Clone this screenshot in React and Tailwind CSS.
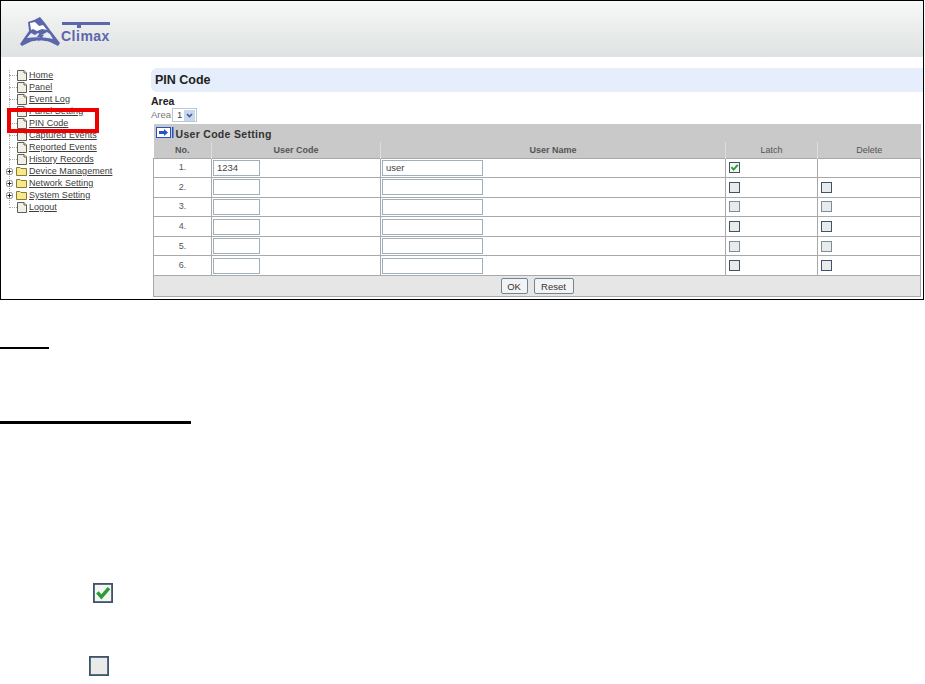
import { useState } from "react";

const menu = [
  { label: "Home" },
  { label: "Panel" },
  { label: "Event Log" },
  { label: "Panel Setting" },
  { label: "PIN Code" },
  { label: "Captured Events" },
  { label: "Reported Events" },
  { label: "History Records" },
  { label: "Device Management", folder: true },
  { label: "Network Setting", folder: true },
  { label: "System Setting", folder: true },
  { label: "Logout" },
];

const users = [
  { no: "1.", code: "1234", name: "user", latch: true, noDelete: true },
  { no: "2." },
  { no: "3.", faded: true },
  { no: "4." },
  { no: "5.", faded: true },
  { no: "6." },
];

function PageIcon() {
  return (
    <svg width="10" height="11" viewBox="0 0 10 11" className="shrink-0">
      <path d="M0.5 0.5H7L9.5 3V10.5H0.5Z" fill="#f1f0e6" stroke="#5f5f56" />
      <path d="M7 0.5V3H9.5" fill="#ffffff" stroke="#5f5f56" />
    </svg>
  );
}

function FolderIcon() {
  return (
    <svg width="11" height="10" viewBox="0 0 11 10" className="shrink-0">
      <path d="M0.5 9.5V1.5H4L5 2.5H10.5V9.5Z" fill="#f7e88e" stroke="#8a7a33" />
    </svg>
  );
}

function PlusBox() {
  return (
    <svg width="7" height="7" viewBox="0 0 7 7" className="shrink-0">
      <rect x="0.5" y="0.5" width="6" height="6" rx="2" fill="#ffffff" stroke="#8a8a8a" />
      <path d="M1.5 3.5H5.5M3.5 1.5V5.5" stroke="#222222" />
    </svg>
  );
}

function CheckBox({ checked, size = 11, faded }) {
  return (
    <svg width={size} height={size} viewBox="0 0 11 11" className="block">
      <rect
        x="0.5"
        y="0.5"
        width="10"
        height="10"
        fill={checked ? "#f2f7f2" : "#e9eaea"}
        stroke={faded ? "#7f8d99" : "#3f5468"}
      />
      {checked && <path d="M2.4 5.2L4.6 7.6L8.8 2.8" fill="none" stroke="#2f9a3a" strokeWidth="1.9" />}
    </svg>
  );
}

function Logo() {
  return (
    <div className="flex items-start">
      <svg width="40" height="30" viewBox="0 0 40 30" className="shrink-0">
        <path
          d="M0 28L9 15L8 6L14 4L20 1L25 7L30 14L40 27L38 30L30 26C24 24 15 24 10 26L2 30Z"
          fill="#5b66ab"
        />
        <path d="M10 7L15 6L19 10L23 9L27 14L22 13L17 15L13 13L11 14Z" fill="#ffffff" />
        <path d="M7 22L11 17L15 19L18 17L22 19L27 16L30 18L33 23C25 21 15 21 7 22Z" fill="#e8eaf4" />
        <path d="M21 15L17 21L20 21L18 26L24 19L21 19L23 15Z" fill="#5b66ab" />
      </svg>
      <div className="ml-[1px] mt-[6px]">
        <div className="relative h-[3px] w-[48px] bg-[#5b66ab] ml-[1px]">
          <div className="absolute left-[15px] top-[3px] w-[4px] h-[3px] bg-[#5b66ab]" />
        </div>
        <div className="mt-[4px] text-[14px] leading-[14px] font-bold tracking-[0.5px] text-[#5b66ab]">Climax</div>
      </div>
    </div>
  );
}

function Sidebar() {
  return (
    <div className="w-[150px] shrink-0 pt-[12px] pl-[5px] relative">
      {/* tree guide line */}
      <div className="absolute left-[8px] top-[13px] h-[135px] border-l border-dotted border-[#aaaaaa]" />
      {menu.map((item) => (
        <div key={item.label} className="relative h-[12px] flex items-center">
          {item.folder ? (
            <>
              <PlusBox />
              <span className="w-[3px]" />
              <FolderIcon />
            </>
          ) : (
            <>
              <span className="w-[11px] pl-[3px]">
                <span className="block border-t border-dotted border-[#aaaaaa]" />
              </span>
              <PageIcon />
            </>
          )}
          <span className="ml-[2px] text-[9px] tracking-[0.05px] leading-[12px] underline text-[#3c3c3c] whitespace-nowrap">
            {item.label}
          </span>
        </div>
      ))}
      {/* red marker around the PIN Code link */}
      <div className="absolute left-[6px] top-[51px] w-[92px] h-[25px] border-[4px] border-[#ee0000]" />
    </div>
  );
}

function UserTable() {
  const cell = "border border-[#a9a9a9] px-[1px] py-0";
  const input = "block w-[47px] h-[16px] border border-[#9fb0bd] bg-white px-[3px] text-[9.5px] text-[#444444]";
  const input2 = "block w-[101px] h-[16px] border border-[#9fb0bd] bg-white px-[3px] text-[9.5px] text-[#444444]";
  return (
    <table className="w-[767px] table-fixed border-collapse text-[9px] leading-[11px] text-[#555555] ml-[2px]">
      <colgroup>
        <col className="w-[58px]" />
        <col className="w-[169px]" />
        <col className="w-[345px]" />
        <col className="w-[92px]" />
        <col className="w-[103px]" />
      </colgroup>
      <thead>
        <tr className="h-[18px] bg-[#c9c9c9]">
          <th colSpan={5} className="text-left font-normal p-0">
            <div className="flex items-center pl-[2px] pt-[3px] text-[10.5px] leading-[13px] font-bold tracking-[0.3px] text-[#333333]">
              <svg width="18" height="11" viewBox="0 0 18 11" className="mr-[2px] mt-[-4px]">
                <rect x="0.5" y="0.5" width="14" height="10" fill="#ffffff" stroke="#2a50c8" />
                <rect x="16" y="0" width="1.5" height="11" fill="#2a50c8" />
                <path d="M3 4H8V2L12 5.5L8 9V7H3Z" fill="#2a50c8" />
              </svg>
              User Code Setting
            </div>
          </th>
        </tr>
        <tr className="h-[16px] bg-[#c9c9c9]">
          <th className="border-r border-[#dddddd] pt-[1px] font-bold">No.</th>
          <th className="border-r border-[#dddddd] pt-[1px] font-bold">User Code</th>
          <th className="border-r border-[#dddddd] pt-[1px] font-bold">User Name</th>
          <th className="border-r border-[#dddddd] pt-[1px] font-normal">Latch</th>
          <th className="pt-[1px] font-normal">Delete</th>
        </tr>
      </thead>
      <tbody>
        {users.map((row) => (
          <tr key={row.no} className="h-[19.6px]">
            <td className={`${cell} text-center`}>{row.no}</td>
            <td className={cell}>
              <input className={input} defaultValue={row.code || ""} />
            </td>
            <td className={cell}>
              <input className={input2} defaultValue={row.name || ""} />
            </td>
            <td className={`${cell} pl-[3px]`}>
              <CheckBox checked={row.latch} faded={row.faded} />
            </td>
            <td className={`${cell} pl-[3px]`}>{!row.noDelete && <CheckBox faded={row.faded} />}</td>
          </tr>
        ))}
        <tr className="h-[21px] bg-[#e6e6e6]">
          <td colSpan={5} className="border border-[#a9a9a9] p-0">
            <div className="flex justify-center gap-[6px]">
              <button className="w-[27px] h-[16px] border border-[#6f8596] rounded-[2px] bg-[#f3f3f3] text-[9.5px] text-[#333333]">
                OK
              </button>
              <button className="w-[40px] h-[16px] border border-[#6f8596] rounded-[2px] bg-[#f3f3f3] text-[9.5px] text-[#333333]">
                Reset
              </button>
            </div>
          </td>
        </tr>
      </tbody>
    </table>
  );
}

export default function App() {
  const [area] = useState("1");

  return (
    <div className="w-[925px] h-[684px] bg-white font-['Liberation_Sans',Arial,sans-serif] overflow-hidden">
      <div className="w-[924px] h-[300px] border border-black flex flex-col">
        <div className="h-[56px] shrink-0 bg-gradient-to-b from-[#f7f8f8] to-[#dfe2e2] pl-[19px] pt-[15px]">
          <Logo />
        </div>
        <div className="flex flex-1 min-h-0">
          <Sidebar />
          <div className="flex-1 min-w-0 pt-[11px]">
            <div className="h-[24px] flex items-center bg-[#e6eefb] rounded-l-[6px] pl-[4px] text-[12.5px] font-bold text-[#222222]">
              PIN Code
            </div>
            <div className="mt-[3px] text-[10.5px] leading-[12px] font-bold text-[#222222]">Area</div>
            <div className="flex items-center h-[14px] mt-[1px] text-[9.5px] text-[#777777]">
              Area
              <div className="ml-[1px] w-[25px] h-[14px] border border-[#b9c7d4] flex items-center justify-between pl-[4px] pr-[1px] text-[#444444]">
                {area}
                <span className="w-[11px] h-[11px] bg-[#c9d7ee] flex items-center justify-center">
                  <svg width="7" height="5" viewBox="0 0 7 5">
                    <path d="M1 1L3.5 3.5L6 1" fill="none" stroke="#3a5a9a" strokeWidth="1.6" />
                  </svg>
                </span>
              </div>
            </div>
            <div className="mt-[2px]">
              <UserTable />
            </div>
          </div>
        </div>
      </div>

      {/* leftovers of the document page below the screenshot */}
      <div className="mt-[47px] w-[49px] h-[2px] bg-black" />
      <div className="mt-[72px] w-[191px] h-[3px] bg-black" />
      <div className="mt-[159px] ml-[93px] w-[20px]">
        <CheckBox checked size={20} />
      </div>
      <div className="mt-[53px] ml-[89px] w-[20px]">
        <CheckBox size={20} />
      </div>
    </div>
  );
}
